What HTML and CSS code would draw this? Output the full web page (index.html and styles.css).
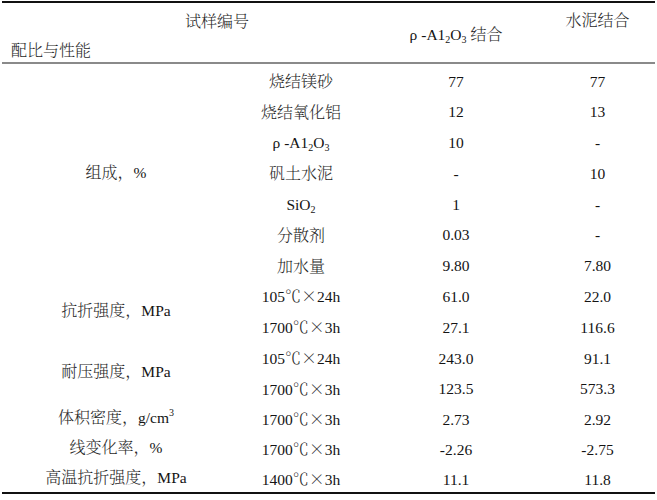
FILE: index.html
```html
<!DOCTYPE html>
<html lang="zh">
<head>
<meta charset="utf-8">
<title>配比与性能</title>
<link rel="stylesheet" href="styles.css">
</head>
<body>
<table class="data">
  <colgroup>
    <col class="c1"><col class="c2"><col class="c3"><col class="c4">
  </colgroup>
  <thead>
    <tr class="head">
      <th colspan="2" class="corner">
        <div class="corner-top"><span class="zh">试样编号</span></div>
        <div class="corner-bottom"><span class="zh">配比与性能</span></div>
      </th>
      <th class="h-mid">ρ -A1<sub>2</sub>O<sub>3</sub> <span class="zh">结合</span></th>
      <th class="h-top"><span class="zh">水泥结合</span></th>
    </tr>
  </thead>
  <tbody>
    <tr><td rowspan="7" class="grp"><span class="zh">组成，</span>%</td><td><span class="zh">烧结镁砂</span></td><td>77</td><td>77</td></tr>
    <tr><td><span class="zh">烧结氧化铝</span></td><td>12</td><td>13</td></tr>
    <tr><td>ρ -A1<sub>2</sub>O<sub>3</sub></td><td>10</td><td>-</td></tr>
    <tr><td><span class="zh">矾土水泥</span></td><td>-</td><td>10</td></tr>
    <tr><td>SiO<sub>2</sub></td><td>1</td><td>-</td></tr>
    <tr><td><span class="zh">分散剂</span></td><td>0.03</td><td>-</td></tr>
    <tr><td><span class="zh">加水量</span></td><td>9.80</td><td>7.80</td></tr>
    <tr><td rowspan="2" class="grp"><span class="zh">抗折强度，</span>MPa</td><td>105<span class="zh">℃×</span>24h</td><td>61.0</td><td>22.0</td></tr>
    <tr><td>1700<span class="zh">℃×</span>3h</td><td>27.1</td><td>116.6</td></tr>
    <tr><td rowspan="2" class="grp"><span class="zh">耐压强度，</span>MPa</td><td>105<span class="zh">℃×</span>24h</td><td>243.0</td><td>91.1</td></tr>
    <tr><td>1700<span class="zh">℃×</span>3h</td><td>123.5</td><td>573.3</td></tr>
    <tr class="tight"><td class="grp"><span class="zh">体积密度，</span>g/cm<sup>3</sup></td><td>1700<span class="zh">℃×</span>3h</td><td>2.73</td><td>2.92</td></tr>
    <tr class="tight"><td class="grp"><span class="zh">线变化率，</span>%</td><td>1700<span class="zh">℃×</span>3h</td><td>-2.26</td><td>-2.75</td></tr>
    <tr class="last"><td class="grp"><span class="zh">高温抗折强度，</span>MPa</td><td>1400<span class="zh">℃×</span>3h</td><td>11.1</td><td>11.8</td></tr>
  </tbody>
</table>
</body>
</html>
```

FILE: styles.css
```css
html, body {
  margin: 0;
  padding: 0;
  background: #ffffff;
}

body {
  padding: 1px 0 0 2px;
  font-family: "Liberation Serif", "Noto Serif CJK SC", "Noto Sans CJK SC", serif;
  font-size: 15.5px;
  color: #141414;
}

.zh {
  font-family: "Noto Serif CJK SC", "Noto Sans CJK SC", serif;
  font-size: 16px;
  font-weight: 300;
  color: #2a2a2a;
}

.data {
  width: 653px;
  border-collapse: collapse;
  table-layout: fixed;
  border-top: 2px solid #111;
  border-bottom: 2px solid #111;
}

.c1 { width: 228px; }
.c2 { width: 142px; }
.c3 { width: 168px; }
.c4 { width: 115px; }

.data th,
.data td {
  padding: 0;
  font-weight: normal;
  text-align: center;
  vertical-align: middle;
  line-height: 18px;
}

.data .head {
  height: 61px;
  border-bottom: 2px solid #8a8a8a;
}

.data .corner {
  text-align: left;
  vertical-align: top;
}

.corner-top {
  padding: 9px 0 0 183px;
}

.corner-bottom {
  padding: 10px 0 0 9px;
}

.data .h-mid {
  vertical-align: middle;
  padding-top: 4px;
}

.data .h-top {
  vertical-align: top;
  padding-top: 8px;
}

.data tbody tr {
  height: 30.8px;
}

.data tbody td {
  padding-top: 6px;
}

.data tbody tr.tight {
  height: 30px;
}

.data tbody .grp {
  padding-top: 2px;
}

sub, sup {
  font-size: 10px;
  line-height: 0;
}

sub { vertical-align: -3px; }
sup { vertical-align: 7px; }
```
